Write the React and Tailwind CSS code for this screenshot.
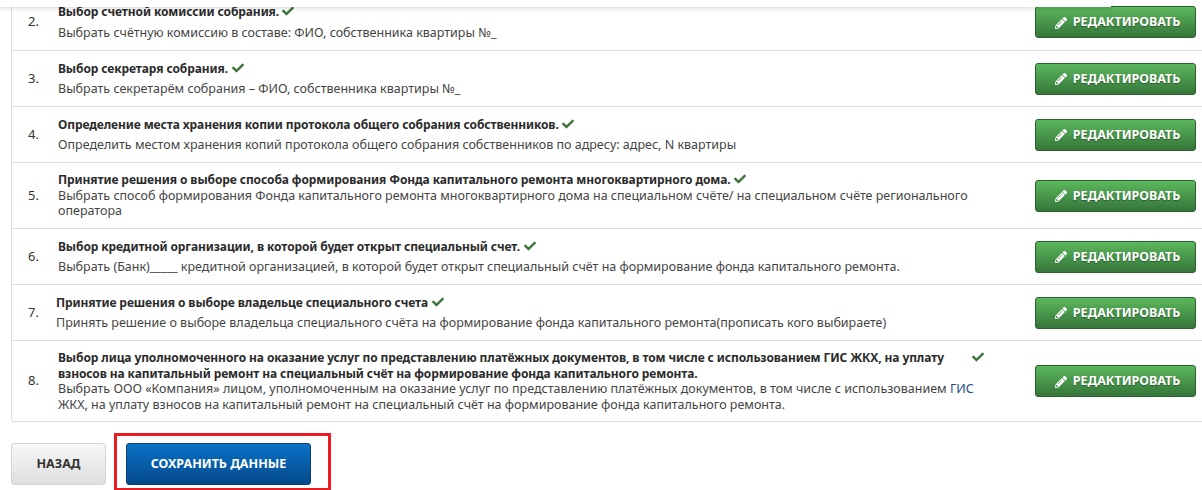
import React from "react";
import { FaCheck, FaPencilAlt } from "react-icons/fa";

function Check({ className = "ml-[4px]" }) {
  return <FaCheck className={`inline-block align-[-1px] text-[12px] text-[#3c763d] ${className}`} />;
}

function EditButton() {
  return (
    <button className="flex h-[32px] w-[161px] shrink-0 items-center justify-center gap-[6px] rounded-[3px] border border-[#2b5f2e] bg-gradient-to-b from-[#5cb85c] to-[#35763a] pl-[4px] pt-[1px] text-[12.5px] font-bold text-white [text-shadow:0_1px_1px_rgba(0,0,0,0.35)]">
      <FaPencilAlt className="text-[12px]" />
      РЕДАКТИРОВАТЬ
    </button>
  );
}

function Row({ num, title, desc, gap, h, textX = "pl-[30px]", check }) {
  return (
    <div className={`flex items-center ${h} border-b border-[#dddddd] pr-[6px]`}>
      <div className="w-[16px] shrink-0 pl-[16px] text-[13px] text-[#333]">{num}.</div>
      <div className={`min-w-0 flex-1 ${textX} pr-[20px] text-[12.5px] leading-[15.5px] text-[#444]`}>
        <div className={`text-[12px] font-bold tracking-[-0.1px] text-[#2b2b2b] ${gap}`}>
          {title}
          {check ?? <Check />}
        </div>
        <div>{desc}</div>
      </div>
      <EditButton />
    </div>
  );
}

export default function App() {
  return (
    <div className="relative h-[490px] w-[1202px] overflow-hidden bg-white font-['Noto_Sans',sans-serif]">
      <div className="absolute left-0 top-0 z-10 h-[7px] w-[1111px] bg-white shadow-[0_1px_5px_rgba(0,0,0,0.18)]" />
      <div className="-mt-[6px] ml-[11px] rounded-bl-[4px] border-l border-[#dddddd]">
        <Row
          num="2"
          h="h-[57px]"
          gap="mb-[5px]"
          check={<Check className="ml-[3px]" />}
          title="Выбор счетной комиссии собрания."
          desc="Выбрать счётную комиссию в составе: ФИО, собственника квартиры №_"
        />
        <Row
          num="3"
          h="h-[56px]"
          gap="mb-[5px]"
          title="Выбор секретаря собрания."
          desc="Выбрать секретарём собрания – ФИО, собственника квартиры №_"
        />
        <Row
          num="4"
          h="h-[56px]"
          gap="mb-[5px]"
          check={<Check className="ml-[3px]" />}
          title="Определение места хранения копии протокола общего собрания собственников."
          desc="Определить местом хранения копий протокола общего собрания собственников по адресу: адрес, N квартиры"
        />
        <Row
          num="5"
          h="h-[66px]"
          gap=""
          check={<Check className="ml-[3px]" />}
          title="Принятие решения о выборе способа формирования Фонда капитального ремонта многоквартирного дома."
          desc={<>Выбрать способ формирования Фонда капитального ремонта многоквартирного дома на специальном счёте/ на специальном счёте регионального<br />оператора</>}
        />
        <Row
          num="6"
          h="h-[56px]"
          gap="mb-[5px]"
          title="Выбор кредитной организации, в которой будет открыт специальный счет."
          desc="Выбрать (Банк)_____ кредитной организацией, в которой будет открыт специальный счёт на формирование фонда капитального ремонта."
        />
        <Row
          num="7"
          h="h-[56px]"
          gap="mb-[5px]"
          textX="pl-[28px]"
          title="Принятие решения о выборе владельце специального счета"
          desc="Принять решение о выборе владельца специального счёта на формирование фонда капитального ремонта(прописать кого выбираете)"
        />
        <Row
          num="8"
          h="h-[81px]"
          gap=""
          check={<></>}
          title={<>Выбор лица уполномоченного на оказание услуг по представлению платёжных документов, в том числе с использованием ГИС ЖКХ, на уплату<Check className="ml-[28px]" /><br />взносов на капитальный ремонт на специальный счёт на формирование фонда капитального ремонта.</>}
          desc={<>Выбрать ООО «Компания» лицом, уполномоченным на оказание услуг по представлению платёжных документов, в том числе с использованием <span className="text-[#1d4f8b]">ГИС</span><br />ЖКХ, на уплату взносов на капитальный ремонт на специальный счёт на формирование фонда капитального ремонта.</>}
        />
      </div>
      <div className="ml-[11px] mt-[21px] flex items-center gap-[20px]">
        <button className="h-[42px] w-[95px] rounded-[3px] border border-[#d4d4d4] bg-gradient-to-b from-[#f8f8f8] to-[#dedede] text-[12.5px] font-bold text-[#333]">
          НАЗАД
        </button>
        <div className="relative">
          <div className="absolute -bottom-[6px] -left-[12px] -right-[20px] -top-[10px] border-[3px] border-[#ed1c24]" />
          <button className="block h-[42px] w-[185px] rounded-[3px] border border-[#0a3f74] bg-gradient-to-b from-[#0b72c6] to-[#04498c] text-[12.5px] font-bold text-white">
            СОХРАНИТЬ ДАННЫЕ
          </button>
        </div>
      </div>
    </div>
  );
}
